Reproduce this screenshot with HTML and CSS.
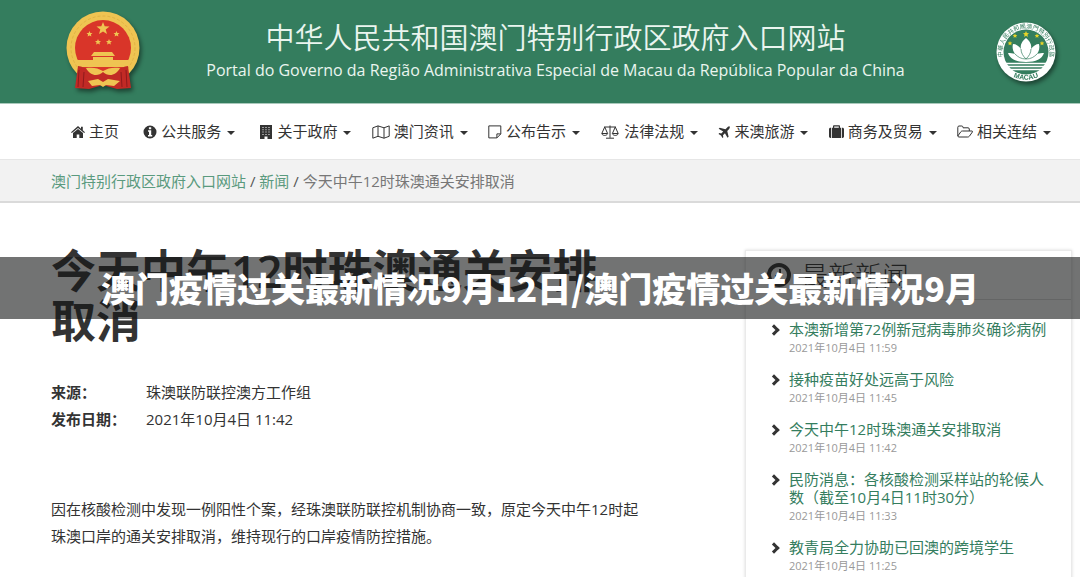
FILE: index.html
```html
<!DOCTYPE html>
<html lang="zh-Hans">
<head>
<meta charset="utf-8">
<meta name="viewport" content="width=device-width, initial-scale=1">
<title>今天中午12时珠澳通关安排取消</title>
<link rel="stylesheet" href="styles.css">
</head>
<body>
<header class="masthead">
  <svg class="emblem emblem-cn" viewBox="0 0 90 90" aria-hidden="true">
    <circle class="gold" cx="44" cy="41" r="36.500"/>
    <circle class="gold-ring" cx="44" cy="41" r="32"/>
    <circle class="red" cx="44" cy="41" r="28"/>
    <path class="gold" d="m44 15 1.700 4.300 4.800.2-3.800 3 1.300 4.500-4-2.600-4 2.600 1.300-4.500-3.800-3 4.800-.2z"/>
    <path class="gold" d="m30.500 24 .9 1.900 2.100.2-1.600 1.500.5 2-1.900-1-1.900 1 .5-2-1.600-1.500 2.100-.2zM57.500 24l.9 1.900 2.100.2-1.600 1.500.5 2-1.900-1-1.900 1 .5-2-1.600-1.500 2.100-.2zM39 32l.9 1.900 2.100.2-1.600 1.500.5 2-1.900-1-1.900 1 .5-2-1.600-1.500 2.100-.2zM50 32l.9 1.900 2.100.2-1.600 1.500.5 2-1.900-1-1.900 1 .5-2-1.600-1.500 2.100-.2z"/>
    <path class="gold" d="M35 45h18l3 4h-2v4h16l-3 7H21l-3-7h16v-4h-2z"/>
    <path class="red-line" d="M33 49.500h22"/>
    <path class="red-dark" d="M19 59c8 1 11 5 17 9l8-4 8 4c6-4 9-8 17-9l3 22-14 1-14-4-14 4-14-1z"/>
    <path class="gold" d="M27 61c7-1 12 0 17 3 5-3 10-4 17-3-4 8-12 9-17 4-5 5-13 4-17-4z"/>
    <path class="gold" d="m29 74 10-2 5 3 5-3 12 2-6 5-8-1-3 2-3-2-8 1z"/>
    <path class="fold" d="M20 63l-1 17M25 65l-1 15M67 63l1 17M62 65l1 15"/>
  </svg>
  <div class="masthead-text">
    <div class="site-name">中华人民共和国澳门特别行政区政府入口网站</div>
    <div class="site-name-pt">Portal do Governo da Região Administrativa Especial de Macau da República Popular da China</div>
  </div>
  <svg class="emblem emblem-mo" viewBox="0 0 64 64" aria-hidden="true">
    <defs>
      <path id="ring-top" d="M12 44.500A23.600 23.600 0 1 1 52 44.500"/>
      <path id="ring-bottom" d="M5 40A28.300 28.300 0 0 0 59 40"/>
    </defs>
    <circle fill="#fff" cx="32" cy="32" r="29.500"/>
    <circle fill="#347d5e" cx="32" cy="32" r="22.500"/>
    <text class="ring-cn"><textPath href="#ring-top" startOffset="50%" text-anchor="middle">中華人民共和國澳門特別行政區</textPath></text>
    <text class="ring-pt"><textPath href="#ring-bottom" startOffset="50%" text-anchor="middle">MACAU</textPath></text>
    <path fill="#e8d427" d="m32 11 .9 2 2.100.2-1.600 1.500.5 2.200-1.900-1.200-1.900 1.200.5-2.200-1.600-1.500 2.100-.2zM21 13.500l.7 1.500 1.600.1-1.200 1.100.4 1.600-1.500-.9-1.500.9.4-1.600-1.200-1.100 1.600-.1zM43 13.500l.7 1.500 1.600.1-1.200 1.100.4 1.600-1.500-.9-1.500.9.4-1.600-1.200-1.100 1.600-.1zM16 21l.7 1.500 1.600.1-1.200 1.100.4 1.600-1.500-.9-1.500.9.4-1.600-1.200-1.100 1.600-.1zM48 21l.7 1.500 1.600.1-1.200 1.100.4 1.600-1.500-.9-1.500.9.4-1.600-1.200-1.100 1.600-.1z"/>
    <path fill="#fff" d="M32 18c4 3 6 7 5 11 2-3 5-5 8-5 1 4 0 7-2 10 2-1 5-1 7-1-2 6-8 9-18 9s-16-3-18-9c2 0 5 0 7 1-2-3-3-6-2-10 3 0 6 2 8 5-1-4 1-8 5-11z"/>
    <path stroke="#347d5e" stroke-width=".7" fill="none" d="M27 29c0 4 2 7 5 10 3-3 5-6 5-10M21 34c3 3 6 5 11 5s8-2 11-5"/>
    <path stroke="#fff" stroke-width="1.300" d="M12 43.500h40M14 46.500h36M17 49.500h30"/>
  </svg>
</header>

<nav class="mainnav" aria-label="主导航">
  <a class="nav-item home" href="#"><svg class="ico w14" viewBox="0 0 14 14"><path d="M7 1 0 7.200l.8.9L7 2.900l6.200 5.200.8-.9-2.200-1.900V1.700H10v2zM2 8v5h3.700V9.500h2.600V13H12V8L7 3.900z"/></svg>主页</a>
  <button class="nav-item info" type="button"><svg class="ico w14" viewBox="0 0 14 14"><path fill-rule="evenodd" d="M7 .5a6.500 6.500 0 1 0 0 13 6.500 6.500 0 0 0 0-13zM5.900 2.300h2.300v2H5.900zm-.9 3h3.200v4.600h1v1.500H5V9.900h1V6.800H5z"/></svg>公共服务<span class="caret"></span></button>
  <button class="nav-item" type="button"><svg class="ico w14" viewBox="0 0 14 14"><path fill-rule="evenodd" d="M1 0h12v14H8.500v-2.500h-3V14H1zm2.500 2v1h1V2zm3 0v1h1V2zm3 0v1h1V2zm-6 2.300v1h1v-1zm3 0v1h1v-1zm3 0v1h1v-1zm-6 2.300v1h1v-1zm3 0v1h1v-1zm3 0v1h1v-1zm-6 2.300v1h1v-1zm3 0v1h1v-1zm3 0v1h1v-1z"/></svg>关于政府<span class="caret"></span></button>
  <button class="nav-item" type="button"><svg class="ico line w18" viewBox="0 0 18 14"><path d="M.8 2.800 6 .9l6 1.900L17.200.9v10.400L12 13.200l-6-1.900-5.200 1.900zM6 .9v10.400M12 2.800v10.400"/></svg>澳门资讯<span class="caret"></span></button>
  <button class="nav-item" type="button"><svg class="ico line w14" viewBox="0 0 14 14"><path d="M.8.9h12v8l-3.900 4H.8zM12.800 8.900H8.900v4"/></svg>公布告示<span class="caret"></span></button>
  <button class="nav-item" type="button"><svg class="ico line w20" viewBox="0 0 18 14"><path d="M3 2h12M9 .5v12.300M5 13.200h8M3.700 2 .8 8.500h5.800zM14.300 2l-2.900 6.500h5.800zM.8 8.700c.8 2.300 5 2.300 5.800 0M11.400 8.700c.8 2.300 5 2.300 5.800 0"/></svg>法律法规<span class="caret"></span></button>
  <button class="nav-item" type="button"><svg class="ico w12" viewBox="0 0 14 14"><path d="M13.500.5c.8.900-.3 2.800-1 3.500l-1.700 1.800 1.600 6.700-1.300 1.200-3-5.200-2.300 2.300.4 2.300-1 .9-1.700-3L.6 9.300l.9-1 2.300.4 2.300-2.300L.8 3.300 2 2l6.700 1.700L10.500 2c.7-.8 2.200-2.200 3-1.500z"/></svg>来澳旅游<span class="caret"></span></button>
  <button class="nav-item" type="button"><svg class="ico w15" viewBox="0 0 15 14"><path fill-rule="evenodd" d="M4 2.800V1.300C4 .7 4.500.2 5 .2h5c.6 0 1 .5 1 1.100v1.500h1V13H3V2.800zm1.200 0h4.600V1.400H5.200zM2.200 2.800V13H1.500C.7 13 0 12.400 0 11.600V4.200c0-.8.7-1.400 1.500-1.400zm10.600 0h.7c.8 0 1.500.6 1.500 1.400v7.400c0 .8-.7 1.400-1.500 1.400h-.7z"/></svg>商务及贸易<span class="caret"></span></button>
  <button class="nav-item" type="button"><svg class="ico line w16" viewBox="0 0 16 14"><path d="M.8 11V2.300c0-.8.5-1.300 1.200-1.300h2.800c.7 0 1.200.5 1.200 1.300v.5h5c.8 0 1.300.5 1.300 1.200v2M.8 11l3.100-4.300c.4-.5.900-.7 1.500-.7H15c.5 0 .7.500.4 1l-3 4.200c-.4.500-1 .8-1.600.8H2c-.7 0-1.200-.4-1.200-1z"/></svg>相关连结<span class="caret"></span></button>
</nav>

<nav class="breadcrumb" aria-label="面包屑">
  <a href="#">澳门特别行政区政府入口网站</a> <span class="sep">/</span> <a href="#">新闻</a> <span class="sep">/</span> <span>今天中午12时珠澳通关安排取消</span>
</nav>

<main class="content">
  <article class="article">
    <h1>今天中午12时珠澳通关安排取消</h1>
    <dl class="meta">
      <dt>来源：</dt><dd>珠澳联防联控澳方工作组</dd>
      <dt>发布日期：</dt><dd>2021年10月4日 11:42</dd>
    </dl>
    <p>因在核酸检测中发现一例阳性个案，经珠澳联防联控机制协商一致，原定今天中午12时起珠澳口岸的通关安排取消，维持现行的口岸疫情防控措施。</p>
  </article>
  <aside class="latest">
    <h2><svg class="clock" viewBox="0 0 24 24" aria-hidden="true"><circle cx="12" cy="12" r="10"/><path d="M13 6v7H8"/></svg>最新新闻</h2>
    <ul class="news">
      <li><a href="#">本澳新增第72例新冠病毒肺炎确诊病例</a><time>2021年10月4日 11:59</time></li>
      <li><a href="#">接种疫苗好处远高于风险</a><time>2021年10月4日 11:45</time></li>
      <li><a href="#">今天中午12时珠澳通关安排取消</a><time>2021年10月4日 11:42</time></li>
      <li><a href="#">民防消息：各核酸检测采样站的轮候人数（截至10月4日11时30分）</a><time>2021年10月4日 11:33</time></li>
      <li><a href="#">教青局全力协助已回澳的跨境学生</a><time>2021年10月4日 11:25</time></li>
    </ul>
  </aside>
</main>
<div class="banner">澳门疫情过关最新情况9月12日/澳门疫情过关最新情况9月</div>
</body>
</html>
```
FILE: styles.css
```css
* { box-sizing: border-box; }
body {
  margin: 0;
  height: 100vh;
  overflow: hidden;
  background: #fff;
  color: #333;
  font: 15px/27px "Open Sans", "Noto Sans CJK SC", sans-serif;
}
a { color: inherit; text-decoration: none; }

.masthead {
  display: flex;
  align-items: center;
  justify-content: space-between;
  height: 104px;
  padding: 0 22px 0 59px;
  background: #347d5e;
  border-bottom: 1px solid #a9c9bb;
  color: #eaf5ef;
}
.emblem { flex: none; filter: drop-shadow(2px 3px 2px rgba(0, 0, 0, .45)); }
.emblem-cn { width: 90px; height: 90px; }
.emblem-mo { width: 64px; height: 64px; }
.gold { fill: #efc452; }
.gold-ring { fill: none; stroke: #e2b344; stroke-width: 1; stroke-dasharray: 3 2; }
.red { fill: #d93529; }
.red-dark { fill: #c12a25; }
.red-line { stroke: #d93529; stroke-width: 1; }
.fold { fill: none; stroke: #8f1a1c; stroke-width: 1; }
.ring-cn { font: 6px "Noto Sans CJK TC", sans-serif; fill: #347d5e; }
.ring-pt { font: bold 7px "Liberation Sans", sans-serif; fill: #347d5e; }
.masthead-text { padding-right: 32px; text-align: center; }
.site-name { font-size: 29px; line-height: 36px; font-weight: 350; }
.site-name-pt { font-size: 16px; line-height: 28px; }

.mainnav {
  display: flex;
  align-items: center;
  justify-content: space-between;
  height: 55px;
  padding: 0 29px 0 71px;
}
.nav-item {
  display: flex;
  align-items: center;
  gap: 4px;
  padding: 0;
  border: 0;
  background: none;
  font: inherit;
  color: #333;
  white-space: nowrap;
}
.home, .info { margin-right: 4px; }
.ico { height: 14px; fill: #333; }
.line { fill: none; stroke: #333; stroke-width: 1; }
.w12 { width: 12px; }
.w14 { width: 14px; }
.w15 { width: 15px; }
.w16 { width: 16px; }
.w18 { width: 18px; }
.w20 { width: 20px; }
.caret {
  margin: 3px 0 0 2px;
  border: 4px solid transparent;
  border-top-color: #333;
  border-bottom: 0;
}

.breadcrumb {
  height: 44px;
  padding: 8px 51px;
  background: #f2f2f2;
  border-top: 1px solid #e6e6e6;
  border-bottom: 2px solid #dadada;
  color: #777;
}
.breadcrumb a { color: #5a9a7e; }
.sep { color: #555; }

.content {
  display: grid;
  grid-template-columns: minmax(0, 1fr) 327px;
  gap: 96px;
  padding: 47px 8px 0 51px;
}
h1 {
  margin: -4px 0 0;
  padding-right: 24px;
  font-size: 45px;
  line-height: 50px;
  font-weight: 600;
}
.meta {
  display: grid;
  grid-template-columns: 95px 1fr;
  margin: 33px 0 0;
}
.meta dt { font-weight: 700; white-space: nowrap; }
.meta dd { margin: 0; }
.article p { margin: 63px 0 0; }

.latest { border: 1px solid #eaeaea; box-shadow: 0 0 3px rgba(0, 0, 0, .15); }
.latest h2 {
  display: flex;
  align-items: center;
  gap: 10px;
  height: 49px;
  margin: 0;
  padding: 0 21px;
  border-bottom: 1px solid #ddd;
  font-size: 27px;
  font-weight: 300;
}
.clock { width: 24px; height: 24px; fill: none; stroke: #333; stroke-width: 4; }
.clock path { stroke-width: 2; }
.news { margin: 0; padding: 20px 24px 0 43px; list-style: none; }
.news li { position: relative; margin-bottom: 13px; }
.news li::before {
  content: "";
  position: absolute;
  left: -19px;
  top: 6px;
  width: 5px;
  height: 5px;
  border: solid #333;
  border-width: 3px 3px 0 0;
  transform: rotate(45deg);
}
.news a { display: block; line-height: 18px; color: #347d5e; }
.news time { display: block; margin-top: 1px; font-size: 11px; line-height: 18px; color: #999; }

.banner {
  position: absolute;
  left: 0;
  right: 0;
  top: 257px;
  padding: 6px 0;
  background: rgba(20, 22, 21, .6);
  color: #fff;
  font-family: "Noto Sans CJK SC", sans-serif;
  font-size: 34px;
  line-height: 50px;
  font-weight: 900;
  text-align: center;
}
```
